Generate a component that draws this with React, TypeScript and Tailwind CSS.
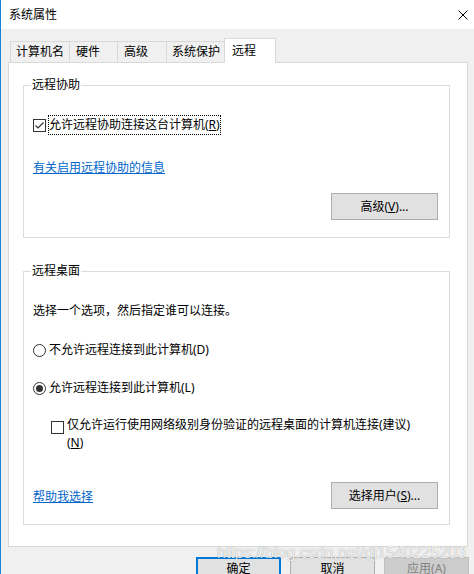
import React from "react";

function Checkbox({ checked = false }: { checked?: boolean }) {
  return (
    <span className="w-[13px] h-[13px] shrink-0 border border-[#333333] bg-white flex items-center justify-center">
      {checked && (
        <svg width="11" height="11" viewBox="0 0 11 11">
          <polyline
            points="1.5,5.5 4,8 9.5,2.5"
            fill="none"
            stroke="#333333"
            strokeWidth="1.2"
          />
        </svg>
      )}
    </span>
  );
}

function Radio({ checked = false }: { checked?: boolean }) {
  return (
    <span className="w-[13px] h-[13px] shrink-0 rounded-full border border-[#333333] bg-white flex items-center justify-center">
      {checked && <span className="w-[7px] h-[7px] rounded-full bg-[#333333]" />}
    </span>
  );
}

function Btn({ children }: { children: React.ReactNode }) {
  return (
    <div className="w-[107px] h-[27px] border border-[#adadad] bg-[#e1e1e1] flex items-center justify-center">
      {children}
    </div>
  );
}

export default function App() {
  return (
    <div className="relative w-[474px] h-[574px] overflow-hidden border-l border-[#1883d7] bg-[#f0f0f0] text-[12px] leading-[16px] text-black font-['Noto_Sans','Noto_Sans_CJK_SC',sans-serif]">
      {/* title bar */}
      <div className="h-[29px] bg-white flex items-center justify-between pl-[8px] pr-[6px]">
        <span>系统属性</span>
        <svg width="10" height="10" viewBox="0 0 10 10">
          <path d="M0.5 0.5 L9.5 9.5 M9.5 0.5 L0.5 9.5" stroke="#000" strokeWidth="1" />
        </svg>
      </div>

      <div className="pt-[9px] pl-[7px] pr-[5px]">
        {/* tabs */}
        <div className="flex items-end h-[24px] pl-[2px]">
          <div className="w-[59px] h-[21px] border-l border-t border-[#d9d9d9] pl-[5px] flex items-center">
            计算机名
          </div>
          <div className="w-[48px] h-[21px] border-l border-t border-[#d9d9d9] pl-[6px] flex items-center">
            硬件
          </div>
          <div className="w-[49px] h-[21px] border-l border-t border-[#d9d9d9] pl-[6px] flex items-center">
            高级
          </div>
          <div className="w-[58px] h-[21px] border-l border-t border-[#d9d9d9] pl-[5px] flex items-center">
            系统保护
          </div>
          <div className="relative z-10 w-[52px] h-[25px] -mb-px bg-white border-l border-r border-t border-[#d9d9d9] pl-[7px] pb-[1px] flex items-center">
            远程
          </div>
        </div>

        {/* panel */}
        <div className="w-[460px] bg-white border border-[#d9d9d9] pt-[14px] pb-[21px] pl-[14px] pr-[17px]">
          {/* 远程协助 */}
          <fieldset className="border border-[#dcdcdc] pl-[9px] pr-[11px] pb-[17px]">
            <legend className="-ml-[2px] px-[1px] leading-[16px]">远程协助</legend>
            <div className="mt-[22px] flex items-center h-[20px]">
              <Checkbox checked />
              <span className="ml-[2px] border border-dotted border-black leading-[18px]">
                允许远程协助连接这台计算机(<span className="underline">R</span>)
              </span>
            </div>
            <div className="mt-[25px]">
              <a className="text-[#0066cc] underline cursor-pointer">有关启用远程协助的信息</a>
            </div>
            <div className="mt-[17px] flex justify-end">
              <Btn>
                高级(<span className="underline">V</span>)...
              </Btn>
            </div>
          </fieldset>

          {/* 远程桌面 */}
          <fieldset className="mt-[25px] border border-[#dcdcdc] pl-[9px] pr-[11px] pb-[15px]">
            <legend className="-ml-[2px] px-[1px] leading-[16px]">远程桌面</legend>
            <p className="mt-[24px]">选择一个选项，然后指定谁可以连接。</p>
            <div className="mt-[23px] flex items-center gap-[3px]">
              <Radio />
              <span>不允许远程连接到此计算机(D)</span>
            </div>
            <div className="mt-[22px] flex items-center gap-[3px]">
              <Radio checked />
              <span>允许远程连接到此计算机(L)</span>
            </div>
            <div className="mt-[20px] ml-[18px] flex items-start leading-[18px]">
              <span className="mt-[5px]">
                <Checkbox />
              </span>
              <span className="ml-[3px]">
                仅允许运行使用网络级别身份验证的远程桌面的计算机连接(建议)
                <br />(<span className="underline">N</span>)
              </span>
            </div>
            <div className="mt-[30px] flex items-center justify-between">
              <a className="text-[#0066cc] underline cursor-pointer mt-[3px]">帮助我选择</a>
              <Btn>
                选择用户(<span className="underline">S</span>)...
              </Btn>
            </div>
          </fieldset>
        </div>

        {/* dialog buttons */}
        <div className="mt-[10px] flex justify-end gap-[9px]">
          <div className="w-[85px] h-[23px] border-2 border-[#0078d7] bg-[#e1e1e1] flex items-center justify-center">
            确定
          </div>
          <div className="w-[85px] h-[23px] border border-[#adadad] bg-[#e1e1e1] flex items-center justify-center">
            取消
          </div>
          <div className="w-[85px] h-[23px] border border-[#bfbfbf] bg-[#cccccc] text-[#838383] flex items-center justify-center">
            应用(A)
          </div>
        </div>
      </div>

      {/* watermark */}
      <div className="absolute left-[216px] top-[544px] text-[16px] leading-[18px] font-['Liberation_Sans',Arial,sans-serif] text-white/85 [text-shadow:0_0_1px_rgba(0,0,0,0.45)] pointer-events-none">
        https://blog.csdn.net/dj1540225203
      </div>
    </div>
  );
}
